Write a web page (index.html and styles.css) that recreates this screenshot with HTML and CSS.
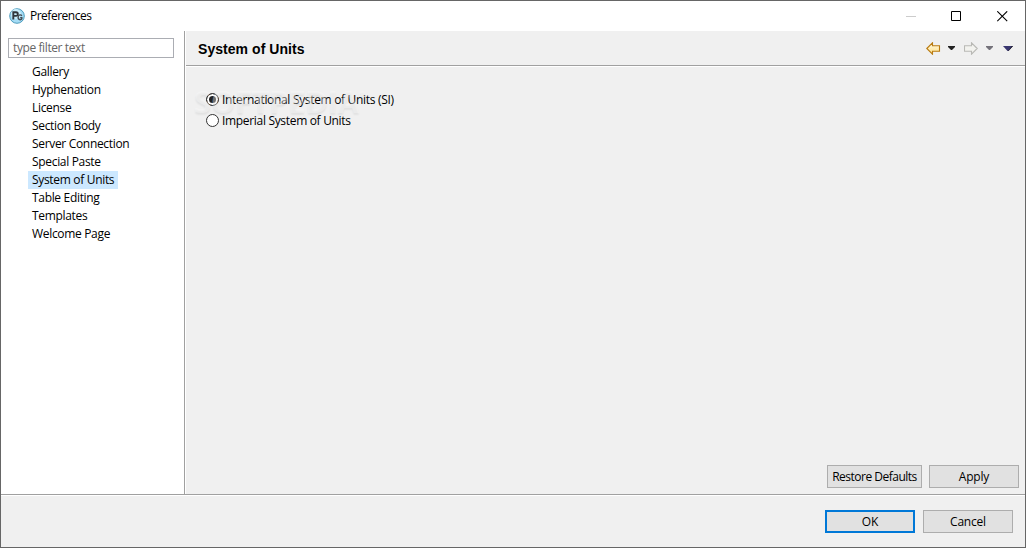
FILE: index.html
```html
<!DOCTYPE html>
<html lang="en">
<head>
    <meta charset="UTF-8">
    <title>Preferences</title>
    <link rel="stylesheet" href="styles.css">
</head>
<body>

    <div class="window">
        <div class="titlebar">
            <svg class="app-icon" width="16" height="16" viewBox="0 0 16 16">
                <circle cx="8" cy="8" r="7.300" fill="#a5dcf5" stroke="#4193b5" stroke-width=".9"/>
                <circle cx="7" cy="6" r="5" fill="#c8ecfa"/>
                <path d="M4.300 11.600V4.300h2.700q1.800 0 1.800 1.800T7 7.900H4.500" fill="none" stroke="#30353b" stroke-width="1.900"/>
                <path d="M12.900 7.700q-.8-.9-2-.8-1.800.3-1.800 2.400 0 2.300 2 2.400 1.500 0 1.700-.8V9.700h-1.600" fill="none" stroke="#454a50" stroke-width="1.400"/>
            </svg>
            <span class="title">Preferences</span>
            <div class="controls">
                <svg width="11" height="11"><path d="M0 5.500h10" stroke="#ccc"/></svg>
                <svg width="11" height="11"><path d="M.5.5h9v9h-9z" fill="none" stroke="#000"/></svg>
                <svg width="11" height="11"><path d="M.3.3l9.900 9.900M10.200.3L.3 10.200" stroke="#000" stroke-width="1.100"/></svg>
            </div>
        </div>

        <div class="main">
            <div class="sidebar">
                <input type="text" class="filter" placeholder="type filter text">
                <ul class="tree">
                    <li><span>Gallery</span></li>
                    <li><span>Hyphenation</span></li>
                    <li><span>License</span></li>
                    <li><span>Section Body</span></li>
                    <li><span>Server Connection</span></li>
                    <li><span>Special Paste</span></li>
                    <li><span class="selected">System of Units</span></li>
                    <li><span>Table Editing</span></li>
                    <li><span>Templates</span></li>
                    <li><span>Welcome Page</span></li>
                </ul>
            </div>

            <div class="page">
                <div class="page-header">
                    <h2>System of Units</h2>
                    <div class="nav">
                        <svg class="arrow" width="15" height="13" viewBox="0 0 15 13">
                            <defs>
                                <linearGradient id="gold" x2="0" y2="1"><stop offset="0" stop-color="#fffbe8"/><stop offset="1" stop-color="#ffdf83"/></linearGradient>
                            </defs>
                            <path d="M.8 6.500L6.500.8v3h7v5.400h-7v3z" fill="url(#gold)" stroke="#b97b12" stroke-width="1.100"/>
                        </svg>
                        <svg class="caret" width="7" height="4"><path d="M0 0h7v1L4 4H3L0 1z" fill="#222"/></svg>
                        <svg class="arrow" width="15" height="13" viewBox="0 0 15 13">
                            <path d="M13.200 6.500L7.500.8v3h-7v5.400h7v3z" fill="#f3f3ef" stroke="#b9b9b5" stroke-width="1.100"/>
                        </svg>
                        <svg class="caret" width="7" height="4"><path d="M0 0h7v1L4 4H3L0 1z" fill="#74727a"/></svg>
                        <svg class="menu" width="10" height="5"><path d="M0 0h10L5.500 5h-1z" fill="#39366f"/><path d="M9 0h1L5.500 5H5z" fill="#111"/></svg>
                    </div>
                </div>

                <div class="options">
                    <label><input type="radio" name="units" checked>International System of Units (SI)</label>
                    <label><input type="radio" name="units">Imperial System of Units</label>
                    <div class="watermark">SOFTPEDIA<sup>®</sup></div>
                </div>

                <div class="page-buttons">
                    <button type="button" class="restore">Restore Defaults</button>
                    <button type="button">Apply</button>
                </div>
            </div>
        </div>

        <div class="footer">
            <button type="button" class="default">OK</button>
            <button type="button">Cancel</button>
        </div>
    </div>

</body>
</html>
```
FILE: styles.css
```css
* { box-sizing: border-box; }
body { margin: 0; font: 12px/18px "Open Sans", "Noto Sans", sans-serif; letter-spacing: -0.32px; color: #000; }
.window { display: flex; flex-direction: column; width: 1026px; height: 548px; border: 1px solid #666; background: #f0f0f0; }

.titlebar { display: flex; align-items: center; height: 30px; padding: 0 17px 0 8px; background: #fff; }
.app-icon { margin-right: 5px; }
.title { flex: 1; letter-spacing: -0.5px; }
.controls { display: flex; gap: 34px; }
.controls svg { display: block; width: 11px; }
.controls svg:last-child { margin-left: 1px; }

.main { display: flex; flex: 1; border-bottom: 1px solid #a0a0a0; }
.sidebar { width: 184px; padding: 7px 10px 0 7px; background: #fff; border-right: 1px solid #a0a0a0; }
.filter { display: block; width: 166px; height: 20px; padding: 0 4px 1px; border: 1px solid #abadb3; font: inherit; letter-spacing: -0.4px; }
.filter::placeholder { color: #666; }
.tree { list-style: none; margin: 5px 0 0; padding: 0 0 0 20px; }
.tree li { height: 18px; }
.tree span { display: inline-block; height: 18px; padding: 0 4px; }
.tree .selected { background: #cce8ff; }

.page { display: flex; flex-direction: column; flex: 1; border-left: 1px solid #fff; }
.page-header { display: flex; align-items: center; justify-content: space-between; height: 35px; padding: 0 12px; border-bottom: 1px solid #a0a0a0; }
.page-header h2 { margin: 2px 0 0; font: bold 14px/18px "Liberation Sans", Arial, sans-serif; letter-spacing: 0.05px; }
.nav { display: flex; align-items: center; }
.nav svg { display: block; }
.arrow { margin-right: 7px; }
.caret { margin-right: 9px; }
.menu { margin-left: 1px; }

.options { position: relative; flex: 1; padding: 22px 0 0 20px; border-top: 1px solid #fff; }
.options label { display: flex; align-items: center; width: max-content; height: 21px; }
.options input { appearance: none; width: 13px; height: 13px; margin: 0 3px 0 0; border: 1px solid #333; border-radius: 50%; background: #fff; }
.options input:checked { background: #222; box-shadow: inset 0 0 0 2px #fff; }
.watermark { position: absolute; left: 8px; top: 19px; font: bold 31px/30px "Open Sans", sans-serif; letter-spacing: -0.4px; color: rgba(250, 250, 250, 0.4); text-shadow: 0 2px 2px rgba(0, 0, 0, 0.06); pointer-events: none; }
.watermark sup { font-size: 9px; line-height: 9px; vertical-align: 15px; }

button { width: 90px; height: 23px; padding: 0; border: 1px solid #adadad; background: #e1e1e1; font: inherit; letter-spacing: -0.2px; color: #000; }
.page-buttons { display: flex; justify-content: flex-end; gap: 7px; padding: 0 6px 6px 0; }
.restore { width: 95px; letter-spacing: -0.5px; }
.footer { display: flex; justify-content: flex-end; gap: 8px; height: 52px; padding: 14px 12px 0 0; border-top: 1px solid #fff; }
.default { border: 2px solid #0078d7; }
```
